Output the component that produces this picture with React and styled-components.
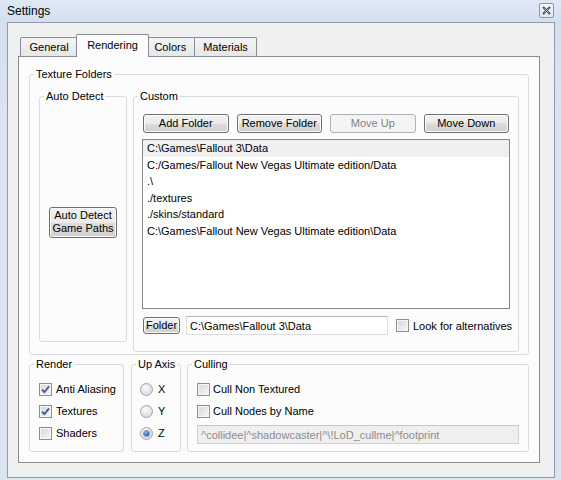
import React from "react";
import styled, { createGlobalStyle } from "styled-components";

const GlobalStyle = createGlobalStyle`
  *, *::before, *::after { box-sizing: border-box; }
  html, body { margin: 0; padding: 0; background: #dae4f1; }
  body {
    font-family: "Liberation Sans", Arial, sans-serif;
    font-size: 11px;
    color: #000;
  }
`;

const Window = styled.div`
  width: 561px;
  height: 480px;
  display: flex;
  flex-direction: column;
  background: linear-gradient(#dfe8f4, #d5e0ee 22px, #dbe5f1 120px, #dbe5f1);
`;

const TitleBar = styled.div`
  height: 22px;
  display: flex;
  align-items: center;
  justify-content: space-between;
  padding: 0 7px 1px 7px;
`;

const Title = styled.span`
  font-size: 12px;
`;

const CloseButton = styled.div`
  width: 15px;
  height: 15px;
  border: 1px solid #8b97a8;
  border-radius: 2px;
  background: linear-gradient(#f4f7fb, #dfe6ef);
  display: flex;
  align-items: center;
  justify-content: center;
`;

const Client = styled.div`
  flex: 1;
  margin: 0 6px 2px 7px;
  border: 1px solid #8d9aab;
  background: #f0f0f0;
  padding: 11px 14px 14px 10px;
  display: flex;
  flex-direction: column;
`;

const TabStrip = styled.div`
  height: 22px;
  display: flex;
  align-items: flex-end;
  padding-left: 2px;
`;

const Tab = styled.div`
  position: relative;
  z-index: ${(p) => (p.$active ? 2 : 1)};
  height: ${(p) => (p.$active ? 23 : 19)}px;
  margin: 0 ${(p) => (p.$active ? -2 : 0)}px ${(p) => (p.$active ? -1 : 0)}px;
  padding: ${(p) => (p.$active ? "0 10px 2px" : "0 8.5px 1px")};
  border: 1px solid #898c95;
  border-bottom: none;
  border-radius: 2px 2px 0 0;
  background: ${(p) => (p.$active ? "#fcfcfc" : "linear-gradient(#f5f5f5, #e6e6e6)")};
  display: flex;
  align-items: center;
  white-space: nowrap;
  & + & { margin-left: ${(p) => (p.$active ? -2 : -1)}px; }
`;

const Panel = styled.div`
  flex: 1;
  border: 1px solid #898c95;
  background: #fcfcfc;
  padding: 10px 10px 0 10px;
  display: flex;
  flex-direction: column;
`;

const Group = styled.fieldset`
  margin: 0;
  min-width: 0;
  border: 1px solid #d5dce2;
  border-radius: 3px;
  padding: ${(p) => `${p.$pt}px ${p.$pr}px ${p.$pb}px ${p.$pl}px`};
  flex: ${(p) => (p.$grow ? "1 1 0" : "none")};
  width: ${(p) => (p.$w ? `${p.$w}px` : "auto")};
  display: flex;
  flex-direction: column;
`;

const Caption = styled.legend`
  padding: 0 2px;
  line-height: 14px;
  white-space: nowrap;
  margin-left: ${(p) => 4 - p.$pl}px;
`;

function GroupBox({ title, pt = 7, pr = 9, pb = 7, pl = 9, w, grow, style, children }) {
  return (
    <Group $pt={pt} $pr={pr} $pb={pb} $pl={pl} $w={w} $grow={grow} style={style}>
      <Caption $pl={pl}>{title}</Caption>
      {children}
    </Group>
  );
}

const FolderRow = styled.div`
  display: flex;
  gap: 6px;
`;

const Centered = styled.div`
  flex: 1;
  display: flex;
  align-items: center;
  justify-content: center;
`;

const Button = styled.div`
  height: ${(p) => p.$h || 19}px;
  width: ${(p) => (p.$w ? `${p.$w}px` : "auto")};
  flex: none;
  padding: 0 3px;
  border: 1px solid ${(p) => (p.$disabled ? "#adb2b5" : "#707070")};
  border-radius: 3px;
  background: ${(p) =>
    p.$disabled
      ? "#f4f4f4"
      : "linear-gradient(#f2f2f2 0%, #ebebeb 50%, #dddddd 50%, #cfcfcf 100%)"};
  box-shadow: inset 0 0 0 1px ${(p) => (p.$disabled ? "#f4f4f4" : "#fbfbfb")};
  color: ${(p) => (p.$disabled ? "#838383" : "#000")};
  display: flex;
  align-items: center;
  justify-content: center;
  text-align: center;
  line-height: 13px;
  white-space: nowrap;
`;

const ButtonGrid = styled.div`
  display: grid;
  grid-template-columns: repeat(4, 1fr);
  gap: 8px;
`;

const FolderList = styled.div`
  margin: 6px -1px 0;
  height: 170px;
  border: 1px solid #828790;
  background: #fff;
`;

const ListItem = styled.div`
  height: 16.6px;
  line-height: 16.6px;
  padding-left: 4px;
  background: ${(p) => (p.$selected ? "#efefef" : "transparent")};
  white-space: nowrap;
`;

const PathRow = styled.div`
  margin-top: 7px;
  height: 19px;
  display: flex;
  align-items: center;
`;

const TextField = styled.div`
  height: 19px;
  width: ${(p) => (p.$w ? `${p.$w}px` : "auto")};
  flex: ${(p) => (p.$w ? "none" : "1")};
  margin: ${(p) => p.$m || "0"};
  padding-left: 3px;
  border: 1px solid ${(p) => (p.$disabled ? "#cfd1d4" : "#dadee4")};
  border-top-color: ${(p) => (p.$disabled ? "#c4c6ca" : "#b5b8be")};
  background: ${(p) => (p.$disabled ? "#efefef" : "#fff")};
  color: ${(p) => (p.$disabled ? "#8d8d8d" : "#000")};
  display: flex;
  align-items: center;
  white-space: nowrap;
  overflow: hidden;
`;

const BottomRow = styled.div`
  margin-top: 2px;
  display: flex;
  gap: 7px;
  & > fieldset:nth-child(3) { margin-left: -1px; }
`;

const OptionRow = styled.div`
  height: 22px;
  flex: none;
  display: flex;
  align-items: center;
  gap: ${(p) => p.$gap || 4}px;
  white-space: nowrap;
`;

const Box = styled.span`
  width: 13px;
  height: 13px;
  flex: none;
  border: 1px solid #8e8f8f;
  background: linear-gradient(135deg, #d3d7dc, #f6f7f8);
  box-shadow: inset 0 0 0 1px #f7f7f7;
  display: flex;
  align-items: center;
  justify-content: center;
`;

const Radio = styled.span`
  width: 13px;
  height: 13px;
  flex: none;
  border-radius: 50%;
  border: 1px solid #a2a5a8;
  background: radial-gradient(circle at 40% 35%, #fbfbfb, #dcdee1 70%, #c9ccd0);
  display: flex;
  align-items: center;
  justify-content: center;
`;

const Dot = styled.span`
  width: 5px;
  height: 5px;
  border-radius: 50%;
  background: radial-gradient(circle at 40% 35%, #8fc0f0, #1f5aa6 70%, #173f78);
  box-shadow: 0 0 0 1px #7c9cc4;
`;

function Check({ checked }) {
  return (
    <Box>
      {checked && (
        <svg width="9" height="9" viewBox="0 0 9 9">
          <path d="M1 4.6 L3.4 7.2 L8 1.4" fill="none" stroke="#45549a" strokeWidth="1.8" />
        </svg>
      )}
    </Box>
  );
}

function Option({ label, checked, radio, gap }) {
  return (
    <OptionRow $gap={gap}>
      {radio ? <Radio>{checked && <Dot />}</Radio> : <Check checked={checked} />}
      <span>{label}</span>
    </OptionRow>
  );
}

const tabs = ["General", "Rendering", "Colors", "Materials"];

const folders = [
  "C:\\Games\\Fallout 3\\Data",
  "C:/Games/Fallout New Vegas Ultimate edition/Data",
  ".\\",
  "./textures",
  "./skins/standard",
  "C:\\Games\\Fallout New Vegas Ultimate edition\\Data",
];

export default function App() {
  return (
    <>
      <GlobalStyle />
      <Window>
        <TitleBar>
          <Title>Settings</Title>
          <CloseButton>
            <svg width="9" height="9" viewBox="0 0 9 9">
              <path d="M1 1 L8 8 M8 1 L1 8" stroke="#4a4f58" strokeWidth="2" />
              <path d="M2.5 2.5 L6.5 6.5 M6.5 2.5 L2.5 6.5" stroke="#e8ecf2" strokeWidth="0.6" />
            </svg>
          </CloseButton>
        </TitleBar>
        <Client>
          <TabStrip>
            {tabs.map((t) => (
              <Tab key={t} $active={t === "Rendering"}>
                {t}
              </Tab>
            ))}
          </TabStrip>
          <Panel>
            <GroupBox title="Texture Folders" pt={8} pr={9} pb={2} pl={9}>
              <FolderRow>
                <GroupBox title="Auto Detect" w={88} pt={0} pr={4} pb={0} pl={4} style={{ marginBottom: 10 }}>
                  <Centered>
                    <Button $w={68} $h={31}>
                      Auto Detect
                      <br />
                      Game Paths
                    </Button>
                  </Centered>
                </GroupBox>
                <GroupBox title="Custom" grow pt={11} pr={9} pb={16} pl={9}>
                  <ButtonGrid>
                    <Button>Add Folder</Button>
                    <Button>Remove Folder</Button>
                    <Button $disabled>Move Up</Button>
                    <Button>Move Down</Button>
                  </ButtonGrid>
                  <FolderList>
                    {folders.map((f, i) => (
                      <ListItem key={i} $selected={i === 0}>
                        {f}
                      </ListItem>
                    ))}
                  </FolderList>
                  <PathRow>
                    <Button $w={37} $h={17}>Folder</Button>
                    <TextField $w={202} $m="0 8px 0 6px">C:\Games\Fallout 3\Data</TextField>
                    <Option label="Look for alternatives" />
                  </PathRow>
                </GroupBox>
              </FolderRow>
            </GroupBox>
            <BottomRow>
              <GroupBox title="Render" w={95} pt={7} pr={4} pb={7} pl={9}>
                <Option label="Anti Aliasing" checked />
                <Option label="Textures" checked />
                <Option label="Shaders" />
              </GroupBox>
              <GroupBox title="Up Axis" w={50} pt={7} pr={4} pb={7} pl={8}>
                <Option radio label="X" gap={5} />
                <Option radio label="Y" gap={5} />
                <Option radio checked label="Z" gap={5} />
              </GroupBox>
              <GroupBox title="Culling" grow pt={7} pr={9} pb={7} pl={9}>
                <Option label="Cull Non Textured" gap={3} />
                <Option label="Cull Nodes by Name" gap={3} />
                <TextField $disabled $m="3px 0 0 0">
                  {"^collidee|^shadowcaster|^\\!LoD_cullme|^footprint"}
                </TextField>
              </GroupBox>
            </BottomRow>
          </Panel>
        </Client>
      </Window>
    </>
  );
}
